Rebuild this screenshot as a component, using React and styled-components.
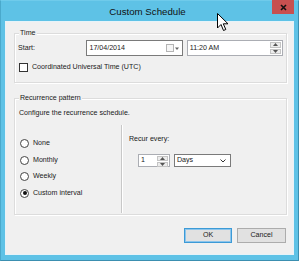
import React from "react";
import styled, { createGlobalStyle } from "styled-components";

const Global = createGlobalStyle`
  html, body { margin: 0; padding: 0; background: #5ec2e6; }
  body { font-family: "Liberation Sans", Arial, sans-serif; }
`;

const Window = styled.div`
  position: relative;
  width: 299px;
  height: 261px;
  box-sizing: border-box;
  background: #5ec2e6;
  border: 1px solid #3b8fb0;
  border-top-color: #6fcbeb;
  border-left-color: #4aa9cc;
  display: flex;
  flex-direction: column;
  font-size: 7.1px;
  color: #1a1a1a;
`;

const TitleBar = styled.div`
  height: 20px;
  display: grid;
  grid-template-columns: 1fr auto 1fr;
  align-items: start;
  padding-right: 4px;
`;

const Title = styled.div`
  grid-column: 2;
  font-size: 9.7px;
  line-height: 11px;
  margin-top: 5px;
  color: #111;
`;

const Close = styled.div`
  grid-column: 3;
  justify-self: end;
  width: 22px;
  height: 14px;
  margin-top: -1px;
  background: #c75050;
  display: flex;
  align-items: center;
  justify-content: center;
`;

const Client = styled.div`
  flex: 1;
  margin: 0 4px 5px 4px;
  background: #f0f0f0;
  border: 1px solid #e6f3f9;
  display: flex;
  flex-direction: column;
  padding: 11px 6px 0 8px;
`;

const Group = styled.div`
  border: 1px solid #dcdcdc;
  box-shadow: inset 1px 1px 0 #fff, 1px 1px 0 #fff;
  display: flex;
  flex-direction: column;
  height: ${(p) => p.h}px;
  box-sizing: border-box;
  margin-top: ${(p) => p.mt || 0}px;
  padding: 0 3px;
`;

const Legend = styled.div`
  align-self: flex-start;
  margin: -5px 0 0 1px;
  padding: 0 1px;
  line-height: 9px;
  background: #f0f0f0;
`;

const Row = styled.div`
  display: flex;
  align-items: center;
  margin-top: ${(p) => p.mt || 0}px;
  padding-left: ${(p) => p.pl || 0}px;
`;

const Label = styled.div`
  width: ${(p) => p.w || "auto"};
  line-height: 9px;
`;

const Box = styled.div`
  width: ${(p) => p.w}px;
  height: ${(p) => p.h || 16}px;
  box-sizing: border-box;
  border: 1px solid ${(p) => (p.dark ? "#7a7a7a" : "#abadb3")};
  background: #fff;
  display: flex;
  align-items: center;
  padding-left: 2px;
  margin-right: ${(p) => p.mr || 0}px;
`;

const BoxText = styled.span`
  flex: 1;
  line-height: 9px;
`;

const Spin = styled.div`
  width: 11px;
  align-self: stretch;
  margin: 1px;
  display: flex;
  flex-direction: column;
  gap: 1px;
`;

const SpinHalf = styled.div`
  flex: 1;
  background: #ececec;
  border: 1px solid #c4c4c4;
  display: flex;
  align-items: center;
  justify-content: center;
`;

const Check = styled.div`
  width: 9px;
  height: 9px;
  box-sizing: border-box;
  border: 1px solid #333;
  background: #fff;
  margin: 0 4px 0 1px;
`;

const Desc = styled.div`
  line-height: 9px;
  margin: 6px 0 0 1px;
`;

const Split = styled.div`
  display: flex;
  flex: 1;
  margin-top: 7px;
  margin-bottom: 1px;
`;

const RadioCol = styled.div`
  width: 103px;
  border-right: 1px solid #c8c8c8;
  box-shadow: 1px 0 0 #fff;
  display: flex;
  flex-direction: column;
  padding-top: 10px;
`;

const RadioRow = styled.div`
  display: flex;
  align-items: center;
  height: 16.7px;
`;

const Radio = styled.div`
  width: 9px;
  height: 9px;
  box-sizing: border-box;
  border-radius: 50%;
  border: 1px solid #444;
  background: #fff;
  margin: 0 4px 0 2px;
  display: flex;
  align-items: center;
  justify-content: center;
  &::after {
    content: "";
    display: ${(p) => (p.on ? "block" : "none")};
    width: 4px;
    height: 4px;
    border-radius: 50%;
    background: #111;
  }
`;

const RecurCol = styled.div`
  display: flex;
  flex-direction: column;
  padding: 10px 0 0 7px;
`;

const Buttons = styled.div`
  display: flex;
  justify-content: flex-end;
  gap: 5px;
  margin-top: 13px;
  padding-right: 1px;
`;

const Button = styled.div`
  width: ${(p) => p.w}px;
  height: 15px;
  box-sizing: border-box;
  background: #e1e1e1;
  border: 1px solid ${(p) => (p.primary ? "#3c9ad6" : "#acacac")};
  box-shadow: ${(p) => (p.primary ? "inset 0 0 0 1px #8cc5ec" : "none")};
  display: flex;
  align-items: center;
  justify-content: center;
  line-height: 9px;
`;

const Cursor = styled.svg`
  position: absolute;
  left: 216px;
  top: 12px;
`;

const Arrow = ({ up }) => (
  <svg width="5" height="3" viewBox="0 0 5 3">
    <path d={up ? "M0 3 L2.5 0 L5 3Z" : "M0 0 L2.5 3 L5 0Z"} fill="#555" />
  </svg>
);

const Chevron = () => (
  <svg width="6" height="4" viewBox="0 0 6 4">
    <path d="M0.5 0.5 L3 3 L5.5 0.5" stroke="#333" strokeWidth="1" fill="none" />
  </svg>
);

export default function App() {
  return (
    <>
      <Global />
      <Window>
        <TitleBar>
          <Title>Custom Schedule</Title>
          <Close>
            <svg width="7" height="7" viewBox="0 0 7 7">
              <path d="M1 1 L6 6 M6 1 L1 6" stroke="#111" strokeWidth="1.6" />
            </svg>
          </Close>
        </TitleBar>
        <Client>
          <Group h={50}>
            <Legend>Time</Legend>
            <Row mt={2}>
              <Label w="69px">Start:</Label>
              <Box w={97} mr={4} dark>
                <BoxText>17/04/2014</BoxText>
                <svg width="13" height="9" viewBox="0 0 13 9" style={{ marginRight: 3 }}>
                  <rect x="0.5" y="0.5" width="7" height="7" fill="#f6f6f6" stroke="#b4b4b4" />
                  <path d="M9 3.5 L13 3.5 L11 6Z" fill="#666" />
                </svg>
              </Box>
              <Box w={97}>
                <BoxText>11:20 AM</BoxText>
                <Spin>
                  <SpinHalf><Arrow up /></SpinHalf>
                  <SpinHalf><Arrow /></SpinHalf>
                </Spin>
              </Box>
            </Row>
            <Row mt={7}>
              <Check />
              <Label>Coordinated Universal Time (UTC)</Label>
            </Row>
          </Group>
          <Group h={117} mt={15}>
            <Legend>Recurrence pattern</Legend>
            <Desc>Configure the recurrence schedule.</Desc>
            <Split>
              <RadioCol>
                <RadioRow><Radio /><Label>None</Label></RadioRow>
                <RadioRow><Radio /><Label>Monthly</Label></RadioRow>
                <RadioRow><Radio /><Label>Weekly</Label></RadioRow>
                <RadioRow><Radio on /><Label>Custom interval</Label></RadioRow>
              </RadioCol>
              <RecurCol>
                <Label>Recur every:</Label>
                <Row mt={10} pl={9}>
                  <Box w={32} h={13} mr={4}>
                    <BoxText>1</BoxText>
                    <Spin>
                      <SpinHalf><Arrow up /></SpinHalf>
                      <SpinHalf><Arrow /></SpinHalf>
                    </Spin>
                  </Box>
                  <Box w={57} h={13} dark>
                    <BoxText>Days</BoxText>
                    <span style={{ marginRight: 4, display: "flex" }}><Chevron /></span>
                  </Box>
                </Row>
              </RecurCol>
            </Split>
          </Group>
          <Buttons>
            <Button w={48} primary>OK</Button>
            <Button w={49}>Cancel</Button>
          </Buttons>
        </Client>
        <Cursor width="12" height="19" viewBox="0 0 12 19">
          <path d="M0.5 0.5 L0.5 15 L4 11.5 L6.5 17.5 L8.8 16.5 L6.3 10.8 L11 10.8 Z" fill="#fff" stroke="#000" strokeWidth="1" />
        </Cursor>
      </Window>
    </>
  );
}
